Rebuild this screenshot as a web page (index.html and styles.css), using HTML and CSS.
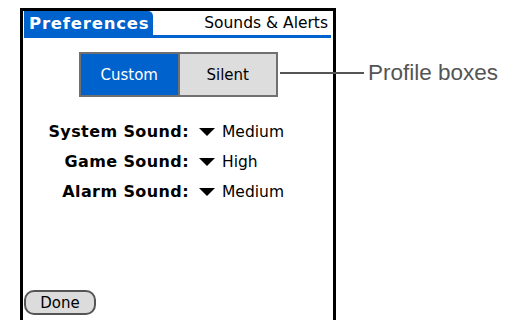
FILE: index.html
```html
<!DOCTYPE html>
<html lang="en">
<head>
    <meta charset="UTF-8">
    <meta name="viewport" content="width=device-width, initial-scale=1.0">
    <title>Sounds & Alerts</title>
    <link rel="stylesheet" href="styles.css">
</head>
<body>
    <div class="screen">
        <div class="title-bar">
            <div class="tab">Preferences</div>
            <div class="panel-name">Sounds &amp; Alerts</div>
        </div>

        <div class="profiles">
            <div class="segment active">Custom</div>
            <div class="segment">Silent</div>
            <div class="callout">
                <span class="callout-line"></span>
                <span class="callout-text">Profile boxes</span>
            </div>
        </div>

        <div class="settings">
            <div class="label">System Sound:</div>
            <div class="value"><span class="arrow"></span>Medium</div>
            <div class="label">Game Sound:</div>
            <div class="value"><span class="arrow"></span>High</div>
            <div class="label">Alarm Sound:</div>
            <div class="value"><span class="arrow"></span>Medium</div>
        </div>

        <div class="footer">
            <button class="done">Done</button>
        </div>
    </div>
</body>
</html>
```

FILE: styles.css
```css
/* Basic reset */
* {
    box-sizing: border-box;
    margin: 0;
    padding: 0;
}

body {
    width: 514px;
    height: 320px;
    overflow: hidden;
    background-color: #ffffff;
    font-family: "DejaVu Sans", sans-serif;
    color: #000;
}

/* Device screen frame */
.screen {
    display: flex;
    flex-direction: column;
    width: 316px;
    height: 312px;
    margin: 8px 0 0 20px;
    border: 3px solid #000;
    border-bottom: none;
}

/* Title bar */
.title-bar {
    display: flex;
    justify-content: space-between;
    align-items: flex-end;
    margin: 0 2px 0 1px;
    border-bottom: 3px solid #0062cc;
}

.tab {
    width: 129px;
    height: 27px;
    margin-bottom: -3px;
    padding: 3px 0 0 5px;
    background-color: #0062cc;
    border-top-right-radius: 5px;
    color: #fff;
    font-size: 16.5px;
    font-weight: bold;
    letter-spacing: 0.8px;
}

.panel-name {
    padding: 0 3px 3px 0;
    font-size: 15.5px;
}

/* Profile boxes */
.profiles {
    position: relative;
    display: flex;
    width: 199px;
    height: 45px;
    margin: 14px 0 0 56px;
    border: 2px solid #707070;
}

.segment {
    flex: 1;
    display: flex;
    justify-content: center;
    align-items: center;
    background-color: #dddddd;
    font-size: 15px;
}

.segment.active {
    background-color: #0062cc;
    color: #fff;
    border-right: 2px solid #707070;
}

.callout {
    position: absolute;
    left: 199px;
    top: 6px;
    display: flex;
    align-items: center;
    gap: 4px;
    white-space: nowrap;
}

.callout-line {
    width: 84px;
    height: 2px;
    background-color: #555;
}

.callout-text {
    font-family: "Liberation Sans", Arial, sans-serif;
    font-size: 22.5px;
    color: #555;
}

/* Sound settings */
.settings {
    display: grid;
    grid-template-columns: 166px auto;
    column-gap: 10px;
    row-gap: 9px;
    margin-top: 24px;
    align-items: center;
}

.label {
    text-align: right;
    font-size: 16px;
    font-weight: bold;
    letter-spacing: 0.4px;
    height: 21px;
    line-height: 21px;
}

.value {
    display: flex;
    align-items: center;
    gap: 7px;
    font-size: 15.5px;
    height: 21px;
}

.arrow {
    width: 0;
    height: 0;
    border-left: 8px solid transparent;
    border-right: 8px solid transparent;
    border-top: 8px solid #000;
}

/* Footer */
.footer {
    margin-top: auto;
    padding: 0 0 5px 1px;
}

.done {
    width: 72px;
    height: 25px;
    background-color: #dcdcdc;
    border: 2px solid #555;
    border-radius: 10px;
    font-family: "DejaVu Sans", sans-serif;
    font-size: 15px;
    color: #000;
}
```
